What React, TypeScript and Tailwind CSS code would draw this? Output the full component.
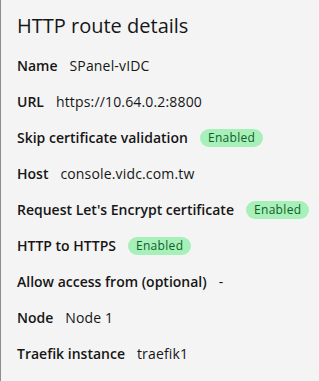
function Badge() {
  return (
    <span className="inline-flex h-[18px] items-center rounded-full bg-[#a7f0ba] px-2 text-[12px] leading-4 tracking-[0.32px] text-[#0e6027]">
      Enabled
    </span>
  );
}

function Row({ label, value, badge }: { label: string; value?: string; badge?: boolean }) {
  return (
    <div className="flex h-5 items-center gap-3 text-[14px] leading-5">
      <span className="font-semibold text-[#161616]">{label}</span>
      {badge ? <Badge /> : <span className="tracking-[0.16px] text-[#161616]">{value}</span>}
    </div>
  );
}

export default function App() {
  return (
    <div
      className="h-[381px] w-[319px] overflow-hidden border-l border-[#8d8d8d] bg-[#f4f4f4] pl-4 pt-3 text-[#161616]"
      style={{ fontFamily: '"Open Sans", sans-serif' }}
    >
      <h2 className="text-[20px] leading-7 font-normal text-[#161616]">HTTP route details</h2>
      <div className="mt-4 flex flex-col gap-4">
        <Row label="Name" value="SPanel-vIDC" />
        <Row label="URL" value="https://10.64.0.2:8800" />
        <Row label="Skip certificate validation" badge />
        <Row label="Host" value="console.vidc.com.tw" />
        <Row label="Request Let's Encrypt certificate" badge />
        <Row label="HTTP to HTTPS" badge />
        <Row label="Allow access from (optional)" value="-" />
        <Row label="Node" value="Node 1" />
        <Row label="Traefik instance" value="traefik1" />
      </div>
    </div>
  );
}
